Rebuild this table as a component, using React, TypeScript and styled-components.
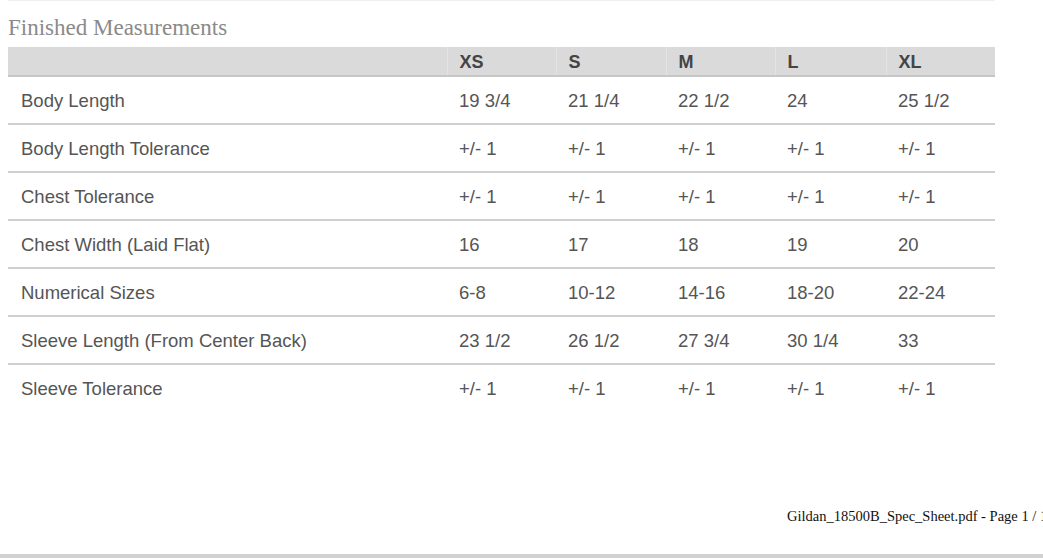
import React from "react";
import styled, { createGlobalStyle } from "styled-components";

const Global = createGlobalStyle`
  html, body { margin: 0; padding: 0; background: #fff; overflow: hidden; }
  #root { width: 1043px; height: 558px; }
`;

const Page = styled.div`
  width: 1043px;
  height: 558px;
  display: flex;
  flex-direction: column;
  overflow: hidden;
`;

const Sheet = styled.div`
  margin-left: 8px;
  width: 987px;
  border-top: 1px solid #f0f0f0;
`;

const Title = styled.h2`
  margin: 0;
  height: 46px;
  box-sizing: border-box;
  padding-top: 14px;
  font-family: "Liberation Serif", serif;
  font-weight: normal;
  font-size: 23px;
  line-height: 26px;
  color: #8a8a8a;
`;

const Table = styled.table`
  width: 987px;
  border-collapse: collapse;
  table-layout: fixed;
  font-family: "Liberation Sans", Arial, sans-serif;
`;

const Col = styled.col<{ $w: number }>`
  width: ${(p) => p.$w}px;
`;

const HeadCell = styled.th<{ $first?: boolean }>`
  height: 29px;
  padding: 3px 0 0 ${(p) => (p.$first ? 13 : 12)}px;
  box-sizing: border-box;
  background: #dadada;
  border-bottom: 2px solid #c6c6c6;
  border-left: ${(p) => (p.$first ? "none" : "1px solid #e4e4e4")};
  text-align: left;
  font-size: 18px;
  font-weight: bold;
  color: #444;
`;

const Row = styled.tr<{ $last?: boolean }>`
  border-bottom: ${(p) => (p.$last ? "none" : "2px solid #cfcfcf")};
`;

const Cell = styled.td<{ $first?: boolean }>`
  height: 48px;
  box-sizing: border-box;
  padding: 1px 0 0 ${(p) => (p.$first ? 13 : 12)}px;
  font-size: 18.5px;
  color: #555;
  white-space: nowrap;
`;

const Footer = styled.div`
  margin-top: auto;
  padding: 0 0 29px 787px;
  font-family: "Liberation Serif", serif;
  font-size: 14.5px;
  color: #111;
  white-space: nowrap;
`;

const BottomBar = styled.div`
  height: 4px;
  background: #d2d2d2;
`;

const widths = [439, 109, 110, 109, 111, 109];
const sizes = ["XS", "S", "M", "L", "XL"];
const rows: [string, string[]][] = [
  ["Body Length", ["19 3/4", "21 1/4", "22 1/2", "24", "25 1/2"]],
  ["Body Length Tolerance", ["+/- 1", "+/- 1", "+/- 1", "+/- 1", "+/- 1"]],
  ["Chest Tolerance", ["+/- 1", "+/- 1", "+/- 1", "+/- 1", "+/- 1"]],
  ["Chest Width (Laid Flat)", ["16", "17", "18", "19", "20"]],
  ["Numerical Sizes", ["6-8", "10-12", "14-16", "18-20", "22-24"]],
  ["Sleeve Length (From Center Back)", ["23 1/2", "26 1/2", "27 3/4", "30 1/4", "33"]],
  ["Sleeve Tolerance", ["+/- 1", "+/- 1", "+/- 1", "+/- 1", "+/- 1"]],
];

export default function App() {
  return (
    <Page>
      <Global />
      <Sheet>
        <Title>Finished Measurements</Title>
        <Table>
          <colgroup>
            {widths.map((w, i) => (
              <Col key={i} $w={w} />
            ))}
          </colgroup>
          <thead>
            <tr>
              <HeadCell $first />
              {sizes.map((s) => (
                <HeadCell key={s}>{s}</HeadCell>
              ))}
            </tr>
          </thead>
          <tbody>
            {rows.map(([label, vals], i) => (
              <Row key={label} $last={i === rows.length - 1}>
                <Cell $first>{label}</Cell>
                {vals.map((v, j) => (
                  <Cell key={j}>{v}</Cell>
                ))}
              </Row>
            ))}
          </tbody>
        </Table>
      </Sheet>
      <Footer>Gildan_18500B_Spec_Sheet.pdf - Page 1 / 1</Footer>
      <BottomBar />
    </Page>
  );
}
